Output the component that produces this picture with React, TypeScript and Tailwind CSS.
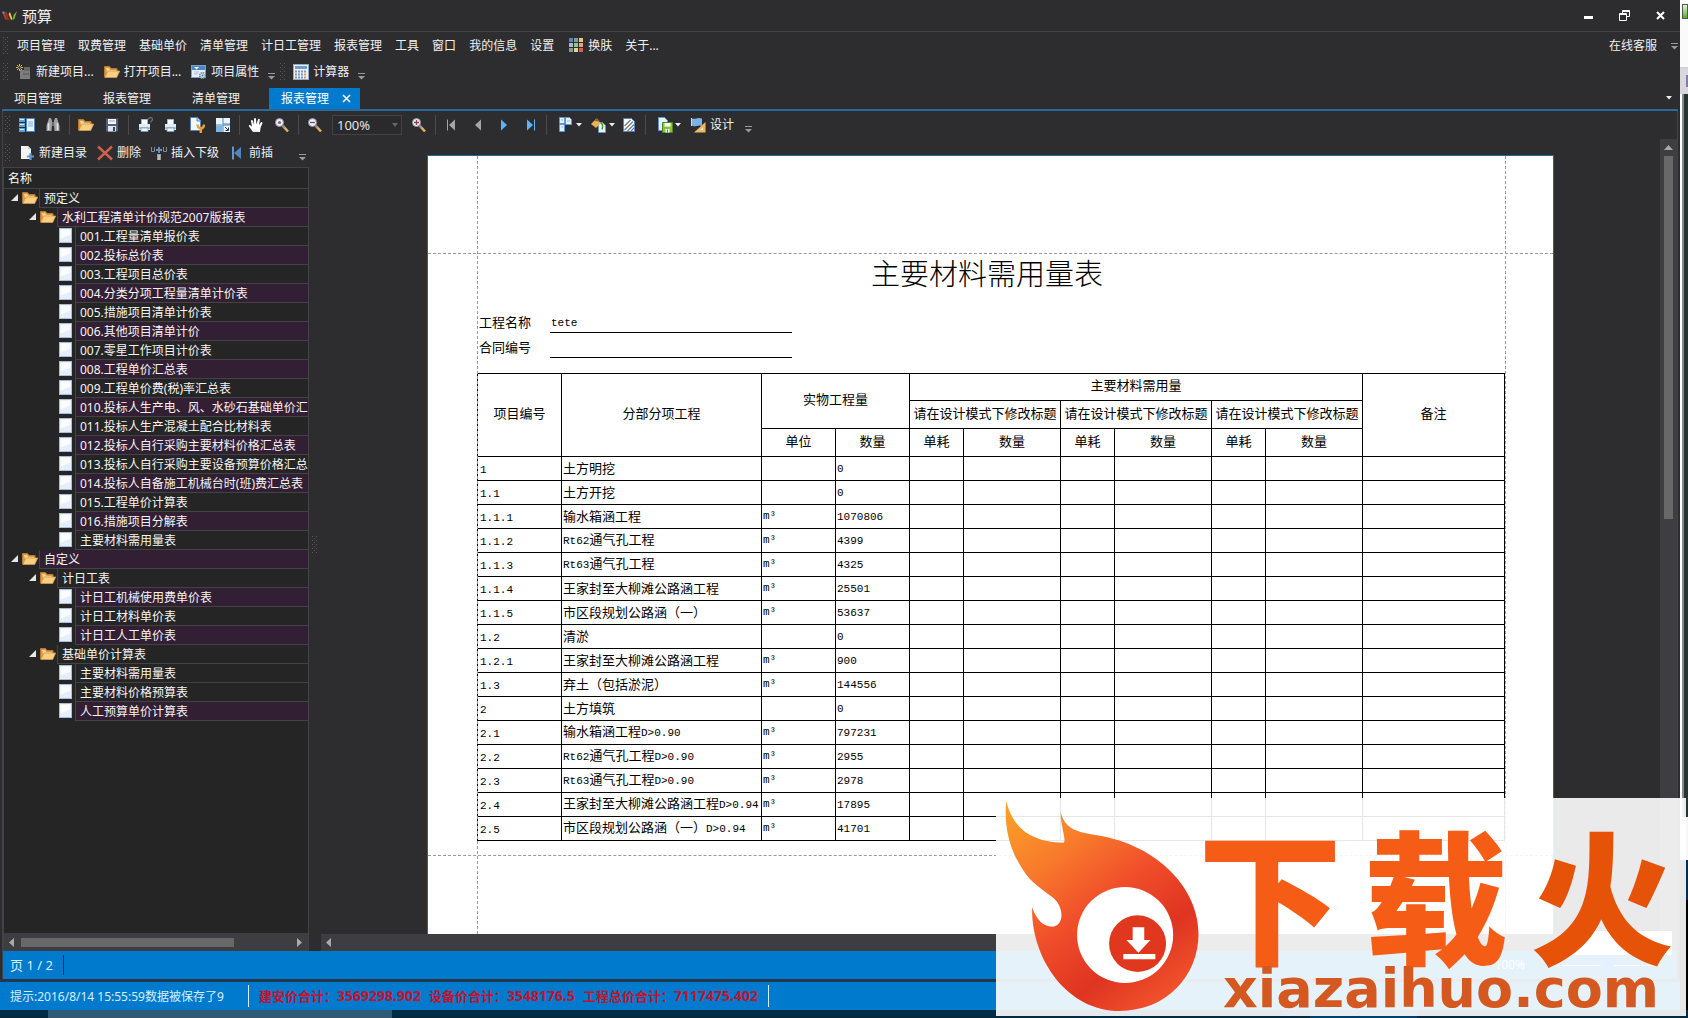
import { useState, type ReactNode } from "react";

const menus = [
  "项目管理", "取费管理", "基础单价", "清单管理", "计日工管理", "报表管理", "工具", "窗口", "我的信息", "设置",
];

type Node = { level: number; name: string; dark?: boolean };

const tree: Node[] = [
  { level: 0, name: "预定义" },
  { level: 1, name: "水利工程清单计价规范2007版报表" },
  { level: 2, name: "001.工程量清单报价表" },
  { level: 2, name: "002.投标总价表" },
  { level: 2, name: "003.工程项目总价表" },
  { level: 2, name: "004.分类分项工程量清单计价表" },
  { level: 2, name: "005.措施项目清单计价表" },
  { level: 2, name: "006.其他项目清单计价" },
  { level: 2, name: "007.零星工作项目计价表" },
  { level: 2, name: "008.工程单价汇总表" },
  { level: 2, name: "009.工程单价费(税)率汇总表" },
  { level: 2, name: "010.投标人生产电、风、水砂石基础单价汇总表" },
  { level: 2, name: "011.投标人生产混凝土配合比材料表" },
  { level: 2, name: "012.投标人自行采购主要材料价格汇总表" },
  { level: 2, name: "013.投标人自行采购主要设备预算价格汇总表" },
  { level: 2, name: "014.投标人自备施工机械台时(班)费汇总表" },
  { level: 2, name: "015.工程单价计算表" },
  { level: 2, name: "016.措施项目分解表" },
  { level: 2, name: "主要材料需用量表" },
  { level: 0, name: "自定义" },
  { level: 1, name: "计日工表" },
  { level: 2, name: "计日工机械使用费单价表" },
  { level: 2, name: "计日工材料单价表" },
  { level: 2, name: "计日工人工单价表" },
  { level: 1, name: "基础单价计算表" },
  { level: 2, name: "主要材料需用量表", dark: true },
  { level: 2, name: "主要材料价格预算表" },
  { level: 2, name: "人工预算单价计算表" },
];

const rows = [
  ["1", "土方明挖", "", "0"],
  ["1.1", "土方开挖", "", "0"],
  ["1.1.1", "输水箱涵工程", "m³", "1070806"],
  ["1.1.2", "Rt62通气孔工程", "m³", "4399"],
  ["1.1.3", "Rt63通气孔工程", "m³", "4325"],
  ["1.1.4", "王家封至大柳滩公路涵工程", "m³", "25501"],
  ["1.1.5", "市区段规划公路涵（一）", "m³", "53637"],
  ["1.2", "清淤", "", "0"],
  ["1.2.1", "王家封至大柳滩公路涵工程", "m³", "900"],
  ["1.3", "弃土（包括淤泥）", "m³", "144556"],
  ["2", "土方填筑", "", "0"],
  ["2.1", "输水箱涵工程D>0.90", "m³", "797231"],
  ["2.2", "Rt62通气孔工程D>0.90", "m³", "2955"],
  ["2.3", "Rt63通气孔工程D>0.90", "m³", "2978"],
  ["2.4", "王家封至大柳滩公路涵工程D>0.94", "m³", "17895"],
  ["2.5", "市区段规划公路涵（一）D>0.94", "m³", "41701"],
];

const totals = [
  ["建安价合计：", "3569298.902"],
  ["设备价合计：", "3548176.5"],
  ["工程总价合计：", "7117475.402"],
];

function Icon({ children, w = 16, h = 16 }: { children: ReactNode; w?: number; h?: number }) {
  return (
    <svg width={w} height={h} viewBox={`0 0 ${w} ${h}`} className="shrink-0" aria-hidden="true">
      {children}
    </svg>
  );
}

function Grip() {
  return (
    <Icon w={7} h={18}>
      {[0, 4, 8, 12, 16].map((y) => (
        <g key={y} fill="#5a5a5e">
          <rect x="0" y={y} width="1" height="1" />
          <rect x="4" y={y} width="1" height="1" />
          <rect x="2" y={y + 2} width="1" height="1" />
        </g>
      ))}
    </Icon>
  );
}

function More() {
  return (
    <Icon w={9} h={8}>
      <path d="M1 1.5h7" stroke="#9a9a9a" />
      <path d="M1 4h7L4.5 7.5z" fill="#9a9a9a" />
    </Icon>
  );
}

function FolderIcon() {
  return (
    <Icon>
      <path d="M.5 13V2.5h5l1.5 2h6v3" fill="#d99a45" stroke="#b87a30" />
      <path d="M2 4h3l1.500 2H12v2H3z" fill="#f4d296" />
      <path d="M.8 13.500 4 7h11.700l-3 6.500z" fill="#f8cf83" stroke="#d99a45" strokeWidth=".8" />
    </Icon>
  );
}

function NewProjectIcon() {
  return (
    <Icon>
      <rect x="4" y="6" width="10" height="9" fill="#7c7c7c" />
      <rect x="8" y="3" width="6" height="4" fill="#676767" />
      <path d="M7 10h6" stroke="#555" />
      <path d="M3.500 0v7M0 3.500h7M1 1l5 5M6 1 1 6" stroke="#e8b45c" />
      <circle cx="3.500" cy="3.500" r="1.200" fill="#2d2d30" />
    </Icon>
  );
}

function PropertyIcon() {
  return (
    <Icon>
      <rect x=".5" y="1.500" width="14" height="12" fill="#e6effa" stroke="#7ba0cc" />
      <rect x="1" y="2" width="13" height="4" fill="#4f87c4" />
      <path d="M3 3h5L5.500 5.500z" fill="#fff" />
      <path d="M3 8h5M3 10h4" stroke="#a8c0de" />
      <circle cx="11.500" cy="11.500" r="2.800" fill="#dfe9f5" stroke="#6689b3" strokeWidth="1.500" strokeDasharray="1.500 .7" />
      <circle cx="11.500" cy="11.500" r="1" fill="#4f6f98" />
    </Icon>
  );
}

function CalcIcon() {
  return (
    <Icon>
      <rect x=".5" y=".5" width="15" height="15" fill="#eaf1fa" stroke="#8fa9c9" />
      <rect x="2" y="2" width="12" height="3" fill="#6f9bd0" />
      {[7, 10, 13].map((y) =>
        [2, 5, 8, 11].map((x) => (
          <rect key={`${x}-${y}`} x={x} y={y - 0.5} width="2" height="2" fill={x === 11 && y > 9 ? "#e09a58" : "#7f96b5"} />
        ))
      )}
    </Icon>
  );
}

function SkinIcon() {
  const colors = ["#5b83b4", "#7fa0a0", "#e6c878", "#9dbed0", "#a3bf88", "#e0a878", "#7fa098", "#e8d28a", "#c9694a"];
  return (
    <Icon w={15} h={15}>
      {colors.map((c, i) => (
        <rect key={i} x={(i % 3) * 5} y={Math.floor(i / 3) * 5} width="4" height="4" fill={c} />
      ))}
    </Icon>
  );
}

function MapIcon() {
  return (
    <Icon>
      <path d="M0 1h6v4H0zM0 6h6v4H0zM0 11h6v4H0z" fill="#5d9fd8" />
      <path d="M1 2.500h4M1 7.500h4M1 12.500h4" stroke="#dceefe" />
      <rect x="7.500" y="1.500" width="8" height="13" fill="#eef6fd" stroke="#4b86c2" />
      <path d="M9 5h5M9 7h5M9 9h5" stroke="#7fa9d4" />
    </Icon>
  );
}

function FindIcon() {
  return (
    <Icon>
      <path d="M4 1h2l1 3v4l-.5 6H1.500V9z" fill="#a2a2a2" />
      <path d="M10 1h2l2.500 8v5h-5L9 8V4z" fill="#a2a2a2" />
      <path d="M7 5h2v4H7z" fill="#6a6a6a" />
      <path d="M3.500 6v7M12.500 6v7" stroke="#e4e4e4" strokeWidth="1.500" />
    </Icon>
  );
}

function SaveIcon() {
  return (
    <Icon>
      <path d="M2 1.500h12v13H2z" fill="#54617e" />
      <rect x="4" y="2" width="8" height="5" fill="#f6f8fc" />
      <path d="M5 4h6" stroke="#8aa" />
      <rect x="4" y="9" width="8" height="5.500" fill="#dfe6f0" />
      <rect x="9" y="10" width="2" height="4" fill="#34415c" />
    </Icon>
  );
}

function PrintIcon({ ask }: { ask?: boolean }) {
  return (
    <Icon>
      <path d="M4.500 2.500h6v5h-6z" fill="#fff" stroke="#9db7d3" />
      <path d="M2 7h11v6H2z" fill="#e3ebf3" />
      <path d="M2 10h11v2H2z" fill="#a9bdd3" />
      <path d="M4 11h7v3.500H4z" fill="#f4f8fc" stroke="#6f9cc8" strokeWidth=".8" />
      {ask && <path d="M11.500 2.500c0-2.500 4-2.500 4 0 0 1.500-2 1.500-2 3" fill="none" stroke="#6c6c6c" strokeWidth="1.400" />}
    </Icon>
  );
}

function SetupIcon() {
  return (
    <Icon>
      <path d="M1.500.500h7l3 3v10h-10z" fill="#f4f9fe" stroke="#4b86c2" />
      <path d="M8 .500v3.500h3.500" fill="#b9d5ef" stroke="#4b86c2" />
      <path d="M8.500 7.500c0 5 6.500 5 6.500 0M11.800 11v5" fill="none" stroke="#e6a13a" strokeWidth="2.400" />
    </Icon>
  );
}

function ScaleIcon() {
  return (
    <Icon>
      <rect x="1" y="1" width="14" height="14" fill="#eaf4fc" />
      <path d="M1 9h6v6H1z" fill="#7db6e4" />
      <path d="M8 1v6h7M1 8h14M8 8v7" fill="none" stroke="#4b86c2" />
      <path d="M10 10l3 3M13.500 10.500v3h-3" fill="none" stroke="#234" />
    </Icon>
  );
}

function HandIcon() {
  return (
    <Icon>
      <path d="M5 15 1 9.500c-.8-1.500 1-2 1.800-1L4 9.700 3 4c0-1.300 1.600-1.400 1.900-.2L6 7.500 6 2c.2-1.300 1.800-1.300 2 0l.4 5.500L10 2.500c.5-1.200 2-.8 1.800.5L11 8l1.800-2.500c.8-1 2-.2 1.600.8L12.500 11 12 15z" fill="#fff" />
      <path d="M6 15v-2M8 15v-2M10 15v-2" stroke="#bbb" strokeWidth=".6" />
    </Icon>
  );
}

function LensIcon({ sign }: { sign: string }) {
  return (
    <Icon>
      <path d="m9 9 5 5.500" stroke="#e6b163" strokeWidth="2.600" />
      <path d="m8.500 8.500 2 2" stroke="#8d8d9a" strokeWidth="2" />
      <circle cx="5.500" cy="5.500" r="4" fill="#e9f1fa" stroke="#8893a5" />
      {sign === "dot" ? <circle cx="5.500" cy="5.500" r="1.600" fill="#b94f55" /> : <path d={sign === "plus" ? "M3 5.500h5M5.500 3v5" : "M3 5.500h5"} stroke="#a83a40" strokeWidth="1.300" />}
    </Icon>
  );
}

function NavIcon({ dir, bar, active }: { dir: "l" | "r"; bar?: boolean; active?: boolean }) {
  const fill = active ? "#5db4f4" : "#a5a5a5";
  return (
    <Icon>
      <path d={dir === "l" ? "M11 2.500v11L5 8z" : "M5 2.500v11L11 8z"} fill={fill} />
      {bar && <path d={dir === "l" ? "M3.500 2.500v11" : "M12.500 2.500v11"} stroke={fill} />}
    </Icon>
  );
}

function Caret() {
  return (
    <Icon w={6} h={4}>
      <path d="M0 0h6L3 3.500z" fill="#eee" />
    </Icon>
  );
}

function PagesIcon() {
  return (
    <Icon>
      <path d="M1.500.500h5v6h-5zM7.500.500h4l2 2v5h-6zM1.500 7.500h5v7h-5z" fill="#e3f1fc" stroke="#5b99d0" />
      <path d="M3 3h2M3 10h2M9 4h3" stroke="#8dbbe3" />
    </Icon>
  );
}

function FillIcon() {
  return (
    <Icon>
      <path d="M7.500 5.500h4l3 3v7h-7z" fill="#e8f3fc" stroke="#5b99d0" />
      <path d="m0 7 5-5 5 4-5 5z" fill="#eeb354" />
      <path d="m3 4 3-3 3 3.500z" fill="#8f6a2e" />
      <path d="M9.500 5.500c2 1 2.500 4 1.500 7" fill="none" stroke="#5d8e36" strokeWidth="1.500" />
    </Icon>
  );
}

function MarkIcon() {
  return (
    <Icon>
      <path d="M2.500 1.500h8l3 3v10h-11z" fill="#fafcff" stroke="#4b86c2" />
      <path d="m3.500 9 6-6M3.500 13l8.500-8.500M6.500 14 13 7.500M10 14l3-3" stroke="#777" strokeWidth="1.200" />
    </Icon>
  );
}

function ExportIcon() {
  return (
    <Icon>
      <path d="M1.500.500h6l3 3v10h-9z" fill="#e3f1fc" stroke="#5b99d0" />
      <path d="M5.500 5.500h10v10h-10z" fill="#86c440" stroke="#4d8a1d" />
      <path d="M7.500 6h6v3.500h-6zM8.500 12h4v3.500h-4z" fill="#fff" />
      <path d="M10.500 12.500v3" stroke="#4d8a1d" />
    </Icon>
  );
}

function DesignIcon() {
  return (
    <Icon>
      <path d="M15.500 5v10.500H4z" fill="#f0b768" />
      <path d="M13 10.500v2.500h-3z" fill="#fff4e0" />
      <path d="M1 1c4 2.500 6-1.500 11 .5V9C8 7 5 11 2 8.500z" fill="#7fb2e2" />
      <path d="M1.500 1v8" stroke="#c8def2" />
    </Icon>
  );
}

function NewDirIcon() {
  return (
    <Icon>
      <path d="M2 1h7l3 3v10H2z" fill="#f3f3f3" />
      <path d="M9 1v3h3" fill="#c9c9c9" />
      <path d="M11.500 8v7M8 11.500h7" stroke="#5f97cf" strokeWidth="2.200" />
    </Icon>
  );
}

function DeleteIcon() {
  return (
    <Icon>
      <path d="m1 1.500 14 13M15 1.500l-14 13" stroke="#d1604a" strokeWidth="2.400" />
    </Icon>
  );
}

function InsertIcon() {
  return (
    <Icon>
      <path d="M.500 2v4.500h3V2M12.500 2v4.500h3V2" fill="none" stroke="#888" />
      <path d="M8 2v6M5 5h6" stroke="#5f97cf" strokeWidth="1.800" />
      <path d="M6 9h4v6H6z" fill="#999" />
      <path d="M8 10v5" stroke="#ddd" />
    </Icon>
  );
}

function FrontIcon() {
  return (
    <Icon>
      <path d="M3 1.500h2v13H3z" fill="#5f97cf" />
      <path d="M12 2v12L5 8z" fill="#4f86be" />
    </Icon>
  );
}

function PageIcon() {
  return (
    <Icon w={13} h={16}>
      <rect x=".5" y=".5" width="12" height="14" fill="#e7eefb" stroke="#a9bcdb" />
      <path d="M1.500 1.500h10v5l-10 4z" fill="#fafcff" />
    </Icon>
  );
}

function Tool({ label, children, wide }: { label: string; children: ReactNode; wide?: boolean }) {
  return (
    <button aria-label={label} className={wide ? "flex h-6 w-[33px] items-center justify-center gap-0.5 pl-1.5" : "flex h-6 w-[26px] items-center justify-center"}>
      {children}
      {wide && <Caret />}
    </button>
  );
}

function Sep() {
  return <div className="mx-[3px] h-5 w-px bg-[#4a4a4e]" />;
}

// Latin runs take the narrow mono face so that two of them span one ideograph
function Mixed({ text }: { text: string }) {
  return (
    <>
      {text.split(/([\x20-\x7e]+)/).map((part, i) =>
        i % 2 ? (
          <span key={i} className="font-['Liberation_Mono',monospace] text-[11px]">{part}</span>
        ) : (
          part
        )
      )}
    </>
  );
}

function Header() {
  return (
    <header>
      <div className="flex h-8 items-center border-b border-[#434346] pl-0.5 pr-3">
        <Icon>
          <path d="M0 4l3 1 2 6 1 1-3-1z" fill="#c8322c" />
          <circle cx="1.500" cy="4.500" r="1.300" fill="#4a86c8" />
          <path d="M3 4h2l2 8H5z" fill="#a82a26" />
          <path d="M8 4l2.500 7L9 12 6.500 6z" fill="#eec23c" />
          <path d="M15 3l-2.500 8-2 1 1-5z" fill="#6fae3f" />
        </Icon>
        <h1 className="ml-1 text-[15px]">预算</h1>
        <div className="ml-auto flex items-center gap-5">
          <button aria-label="最小化" className="flex h-4 w-4 items-center justify-center">
            <Icon w={9} h={6}><path d="M0 3h9v3H0z" fill="#fff" /></Icon>
          </button>
          <button aria-label="还原" className="flex h-4 w-4 items-center justify-center">
            <Icon w={11} h={11}>
              <path d="M3.500 3.500V.500h7v6h-3M3.500 1.500h7" fill="none" stroke="#fff" />
              <path d="M.500 3.500h7v7h-7zM.500 4.500h7" fill="none" stroke="#fff" />
            </Icon>
          </button>
          <button aria-label="关闭" className="flex h-4 w-4 items-center justify-center">
            <Icon w={9} h={9}><path d="m1 1 7 7M8 1 1 8" stroke="#fff" strokeWidth="2" /></Icon>
          </button>
        </div>
      </div>

      <nav className="flex h-[27px] items-center gap-[13px] pl-[3px] pr-px">
        <div className="-mr-1.5"><Grip /></div>
        {menus.map((m) => (
          <button key={m}>{m}</button>
        ))}
        <button className="ml-0.5 flex items-center gap-1">
          <SkinIcon />
          换肤
        </button>
        <button>关于...</button>
        <button className="ml-auto">在线客服</button>
        <More />
      </nav>

      <div className="flex h-[29px] items-center pb-1 pl-[3px]">
        <Grip />
        <button className="ml-1.5 flex items-center gap-1"><NewProjectIcon />新建项目...</button>
        <button className="ml-2.5 flex items-center gap-1"><FolderIcon />打开项目...</button>
        <button className="ml-2.5 flex items-center gap-1"><PropertyIcon />项目属性</button>
        <div className="ml-2 mt-2"><More /></div>
        <div className="ml-1"><Grip /></div>
        <button className="ml-1.5 flex items-center gap-1"><CalcIcon />计算器</button>
        <div className="ml-2 mt-2"><More /></div>
      </div>

      <div role="tablist" className="flex h-[21px] items-stretch pl-0.5">
        {["项目管理", "报表管理", "清单管理"].map((t) => (
          <button role="tab" key={t} className="w-[89px] pl-3 text-left">{t}</button>
        ))}
        <button role="tab" aria-selected="true" className="flex w-[91px] items-center justify-between bg-[#007acc] pl-3 pr-[9px] text-white">
          报表管理
          <Icon w={9} h={9}><path d="m1 1 7 7M8 1 1 8" stroke="#fff" strokeWidth="1.500" /></Icon>
        </button>
        <div className="ml-auto mt-2 pr-2"><Caret /></div>
      </div>
      <div className="mx-0.5 h-0.5 bg-[#2a6a98]" />
    </header>
  );
}

function PreviewToolbar() {
  const [zoom, setZoom] = useState("100%");
  return (
    <div className="flex h-7 shrink-0 items-center pl-0.5">
      <Grip />
      <div className="w-0.5" />
      <Tool label="文档结构"><MapIcon /></Tool>
      <Tool label="查找"><FindIcon /></Tool>
      <Sep />
      <Tool label="打开"><FolderIcon /></Tool>
      <Tool label="保存"><SaveIcon /></Tool>
      <Sep />
      <Tool label="打印"><PrintIcon ask /></Tool>
      <Tool label="快速打印"><PrintIcon /></Tool>
      <Tool label="页面设置"><SetupIcon /></Tool>
      <Tool label="缩放"><ScaleIcon /></Tool>
      <Sep />
      <Tool label="手形工具"><HandIcon /></Tool>
      <Tool label="放大镜"><LensIcon sign="dot" /></Tool>
      <Sep />
      <Tool label="缩小"><LensIcon sign="minus" /></Tool>
      <div className="relative mx-1 flex items-center">
        <select
          aria-label="显示比例"
          value={zoom}
          onChange={(e) => setZoom(e.target.value)}
          className="h-5 w-[70px] appearance-none border border-[#434346] bg-[#2a2a2c] pl-1 font-['Noto_Sans',sans-serif] text-[13px] leading-4 text-[#e4e4e4]"
        >
          <option>50%</option>
          <option>100%</option>
          <option>200%</option>
        </select>
        <svg width="6" height="4" viewBox="0 0 6 4" className="pointer-events-none absolute right-1">
          <path d="M0 0h6L3 4z" fill="#666" />
        </svg>
      </div>
      <Tool label="放大"><LensIcon sign="plus" /></Tool>
      <Sep />
      <Tool label="首页"><NavIcon dir="l" bar /></Tool>
      <Tool label="上一页"><NavIcon dir="l" /></Tool>
      <Tool label="下一页"><NavIcon dir="r" active /></Tool>
      <Tool label="末页"><NavIcon dir="r" bar active /></Tool>
      <Sep />
      <Tool label="多页" wide><PagesIcon /></Tool>
      <Tool label="背景色" wide><FillIcon /></Tool>
      <Tool label="水印"><MarkIcon /></Tool>
      <Sep />
      <Tool label="导出" wide><ExportIcon /></Tool>
      <button className="flex items-center gap-1 px-2"><DesignIcon />设计</button>
      <div className="ml-0.5 mt-2"><More /></div>
    </div>
  );
}

function TreeRow({ node, index }: { node: Node; index: number }) {
  const purple = index % 2 === 1 && !node.dark;
  return (
    <li className="flex h-[19px]">
      <div className={["w-[34px]", "w-[52px]", "w-[70px]"][node.level] + " flex shrink-0 items-center justify-end gap-1 pb-0.5"}>
        {node.level < 2 ? (
          <>
            <Icon w={7} h={7}><path d="M7 0v7H0z" fill="#e6e6e6" /></Icon>
            <FolderIcon />
          </>
        ) : (
          <div className="pr-0.5"><PageIcon /></div>
        )}
      </div>
      <div className={"ml-px flex-1 overflow-hidden whitespace-nowrap border-b border-l border-[#434346] pl-1 leading-5 text-[#f4f4f4] " + (purple ? "bg-[#331f33]" : "")}>
        {node.name}
      </div>
    </li>
  );
}

function Sidebar() {
  return (
    <aside className="flex w-[306px] shrink-0 flex-col">
      <div className="flex h-7 shrink-0 items-center pl-0.5">
        <Grip />
        <button className="ml-[7px] flex items-center gap-1"><NewDirIcon />新建目录</button>
        <button className="ml-2.5 flex items-center gap-1"><DeleteIcon />删除</button>
        <button className="ml-2.5 flex items-center gap-1"><InsertIcon />插入下级</button>
        <button className="ml-2.5 flex items-center gap-1"><FrontIcon />前插</button>
        <div className="ml-auto mt-2 pr-0.5"><More /></div>
      </div>
      <div className="flex min-h-0 flex-1 flex-col border border-b-0 border-[#434346] bg-[#252526]">
        <div className="h-[21px] shrink-0 border-b border-[#434346] pl-1 leading-[22px] text-white">名称</div>
        <ul className="min-h-0 flex-1 overflow-hidden">
          {tree.map((n, i) => (
            <TreeRow key={i} node={n} index={i} />
          ))}
        </ul>
        <div className="flex h-[18px] shrink-0 items-center bg-[#3e3e42] px-[5px]">
          <Icon w={6} h={9}><path d="M5 0v9L0 4.500z" fill="#aaa" /></Icon>
          <div className="ml-1.5 h-[9px] w-[213px] bg-[#686868]" />
          <div className="ml-auto"><Icon w={6} h={9}><path d="M0 0v9l5-4.500z" fill="#aaa" /></Icon></div>
        </div>
      </div>
    </aside>
  );
}

function ReportTable() {
  const th = "border border-black px-0 pt-0 pb-1 font-normal";
  const td = "border border-black px-px pt-0 pb-0.5 whitespace-nowrap";
  return (
    <table className="mt-[15px] w-[1028px] table-fixed border-collapse leading-4">
      <colgroup>
        <col className="w-[84px]" />
        <col className="w-[200px]" />
        <col className="w-[74px]" />
        <col className="w-[74px]" />
        <col className="w-[54px]" />
        <col className="w-[97px]" />
        <col className="w-[54px]" />
        <col className="w-[97px]" />
        <col className="w-[54px]" />
        <col className="w-[97px]" />
        <col className="w-[142px]" />
      </colgroup>
      <thead>
        <tr className="h-[27px]">
          <th rowSpan={3} className={th}>项目编号</th>
          <th rowSpan={3} className={th}>分部分项工程</th>
          <th rowSpan={2} colSpan={2} className={th}>实物工程量</th>
          <th colSpan={6} className={th}>主要材料需用量</th>
          <th rowSpan={3} className={th}>备注</th>
        </tr>
        <tr className="h-7">
          {[1, 2, 3].map((n) => (
            <th key={n} colSpan={2} className={th + " whitespace-nowrap"}>请在设计模式下修改标题</th>
          ))}
        </tr>
        <tr className="h-7">
          <th className={th}>单位</th>
          <th className={th}>数量</th>
          {[1, 2, 3].flatMap((n) => [
            <th key={`a${n}`} className={th}>单耗</th>,
            <th key={`b${n}`} className={th}>数量</th>,
          ])}
        </tr>
      </thead>
      <tbody>
        {rows.map(([code, name, unit, qty]) => (
          <tr key={code} className="h-6">
            <td className="border border-black px-0.5 py-0"><Mixed text={code} /></td>
            <td className={td}><Mixed text={name} /></td>
            <td className={td + " font-['Liberation_Mono',monospace] text-[11px]"}>{unit}</td>
            <td className={td}><Mixed text={qty} /></td>
            {[4, 5, 6, 7, 8, 9, 10].map((c) => (
              <td key={c} className={td} />
            ))}
          </tr>
        ))}
      </tbody>
    </table>
  );
}

function Paper() {
  return (
    <div className="relative mx-auto mt-4 min-h-[795px] w-[1127px] border border-[#1c6a9c] bg-white pl-[49px] pt-[98px] text-[13px] text-black">
      <div className="pointer-events-none absolute inset-y-0 left-[49px] border-l border-dashed border-[#9a9a9a]" />
      <div className="pointer-events-none absolute inset-y-0 right-[47px] border-l border-dashed border-[#9a9a9a]" />
      <div className="pointer-events-none absolute inset-x-0 top-[97px] border-t border-dashed border-[#9a9a9a]" />
      <div className="pointer-events-none absolute inset-x-0 top-[699px] border-t border-dashed border-[#9a9a9a]" />
      <h2 className="w-[1020px] text-center text-[29px] font-light leading-10">主要材料需用量表</h2>
      <div className="mt-3.5">
        {[["name", "工程名称", "tete"], ["contract", "合同编号", ""]].map(([id, label, value]) => (
          <div key={id} className="flex h-[25px] items-stretch pl-0.5">
            <label htmlFor={id} className="w-[71px] leading-7">{label}</label>
            <input id={id} defaultValue={value} className="w-[242px] border-b border-black bg-transparent pl-px pt-1.5 font-['Liberation_Mono',monospace] text-[11px] outline-none" />
          </div>
        ))}
      </div>
      <ReportTable />
    </div>
  );
}

function Watermark() {
  return (
    <div className="absolute bottom-0.5 right-0.5 h-[218px] w-[690px] bg-white/90">
      <svg width="690" height="218" viewBox="13 24 1550 654" preserveAspectRatio="none" className="absolute inset-0">
        <defs>
          <linearGradient id="flame" x1="0" y1="0" x2=".7" y2="1">
            <stop offset="0" stopColor="#fba524" />
            <stop offset=".3" stopColor="#f87a2c" />
            <stop offset=".55" stopColor="#f04e2a" />
            <stop offset=".8" stopColor="#df3421" />
            <stop offset="1" stopColor="#ef4f2a" />
          </linearGradient>
        </defs>
        <path
          fill="url(#flame)"
          d="M36 32C48 100 80 155 165 158C172 150 158 110 158 66C168 112 185 124 240 136C380 166 468 300 468 430C468 560 395 663 290 663C175 663 92 510 94 352C104 390 118 409 140 410C164 408 168 358 144 326C120 300 92 280 72 236C44 180 30 110 36 32Z"
        />
        <ellipse cx="303" cy="435" rx="108" ry="144" fill="#fff" />
        <ellipse cx="331" cy="461" rx="64" ry="85" fill="#e0381f" />
        <path d="M320 412h26v38h14l-27 38-27-38h14zM299 492h72v16h-72z" fill="#fff" />
      </svg>
      <div className="absolute left-[202px] top-[36px] flex gap-[22px] text-[144px] font-black leading-[128px] text-[#f55c16]">
        <span>下</span>
        <span>载</span>
        <span className="text-[#e65208]">火</span>
      </div>
      <div className="absolute left-[227px] top-[164px] font-['DejaVu_Sans',sans-serif] text-[54px] font-bold leading-[54px] text-[#d4581f]">
        xiazaihuo.com
      </div>
    </div>
  );
}

export default function App() {
  return (
    <div className="relative flex h-screen flex-col overflow-hidden bg-[#2d2d30] font-['Noto_Sans','Noto_Sans_CJK_SC',sans-serif] text-xs text-[#f0f0f0]">
      <div className="flex min-h-0 flex-1">
        <div className="flex min-w-0 flex-1 flex-col">
          <Header />
          <main className="mx-0.5 flex min-h-0 flex-1 flex-col border-x border-[#434346]">
            <PreviewToolbar />
            <div className="flex min-h-0 flex-1">
              <Sidebar />
              <div className="flex w-3 shrink-0 items-center justify-center"><Grip /></div>
              <div className="flex min-w-0 flex-1 flex-col">
                <div className="flex min-h-0 flex-1">
                  <div className="min-w-0 flex-1 overflow-hidden"><Paper /></div>
                  <div className="flex w-[17px] flex-col items-center bg-[#3e3e42] pt-1.5">
                    <Icon w={9} h={5}><path d="M0 5h9L4.500 0z" fill="#aaa" /></Icon>
                    <div className="mt-1.5 h-[363px] w-[9px] bg-[#686868]" />
                  </div>
                </div>
                <div className="flex h-[17px] shrink-0 items-center bg-[#3e3e42] pl-[5px]">
                  <Icon w={6} h={9}><path d="M5 0v9L0 4.500z" fill="#aaa" /></Icon>
                </div>
              </div>
            </div>
            <div className="flex h-7 shrink-0 items-center bg-[#007acc] pl-[7px] pr-5">
              <span className="pt-0.5 text-[13px] text-[#d8efff]">页 1 / 2</span>
              <div className="ml-2.5 h-5 w-px bg-[#1c2c3c]" />
              <label htmlFor="zoom" className="ml-auto pr-8">100%</label>
              <input id="zoom" type="range" defaultValue="50" className="h-px w-[100px] appearance-none bg-white" />
            </div>
          </main>
          <div className="h-[3px] shrink-0 bg-[#22384a]" />
          <footer className="flex h-7 shrink-0 items-center bg-[#007acc] pl-2.5">
            <span className="w-[238px] pt-0.5 text-[#d8efff]">提示:2016/8/14 15:55:59数据被保存了9</span>
            <div className="h-[22px] w-px bg-[#d8efff]" />
            <div className="mx-2.5 flex gap-2 font-bold leading-6 text-[#c4122c]">
              {totals.map(([label, value]) => (
                <div key={label} className="flex text-[13px]">
                  {label}
                  <span className="text-sm leading-6">{value}</span>
                </div>
              ))}
            </div>
            <div className="h-[22px] w-px bg-[#d8efff]" />
          </footer>
        </div>
        {/* sliver of the window behind */}
        <div className="flex w-2 shrink-0 flex-col">
          <div className="flex h-[67px] flex-col items-end bg-[#fafafa] pt-1">
            <div className="h-[15px] w-1.5 border border-[#555] bg-linear-to-b from-[#e6f6d8] to-[#4caa16]" />
          </div>
          <div className="flex h-[27px] items-center justify-end border-t border-[#ccc] bg-[#d8d8dc]">
            <div className="h-3 w-0.5 bg-[#8878b0]" />
          </div>
          <div className="h-[723px] border-l-2 border-white bg-[#263434]"><div className="h-full w-0.5 bg-[#8a8a8a]" /></div>
          <div className="h-[43px] bg-[#f6f6f6]" />
          <div className="h-10 bg-[#003050]" />
          <div className="flex-1 bg-black" />
        </div>
      </div>
      <div className="flex h-2 shrink-0 bg-[#002b45]">
        <div className="ml-12 w-[344px] bg-[#305a75]" />
        <div className="ml-auto mr-[271px] w-[107px] bg-[#00406c]" />
      </div>
      <div className="absolute bottom-[63px] right-4 h-6 w-[107px] bg-white" />
      <Watermark />
    </div>
  );
}
